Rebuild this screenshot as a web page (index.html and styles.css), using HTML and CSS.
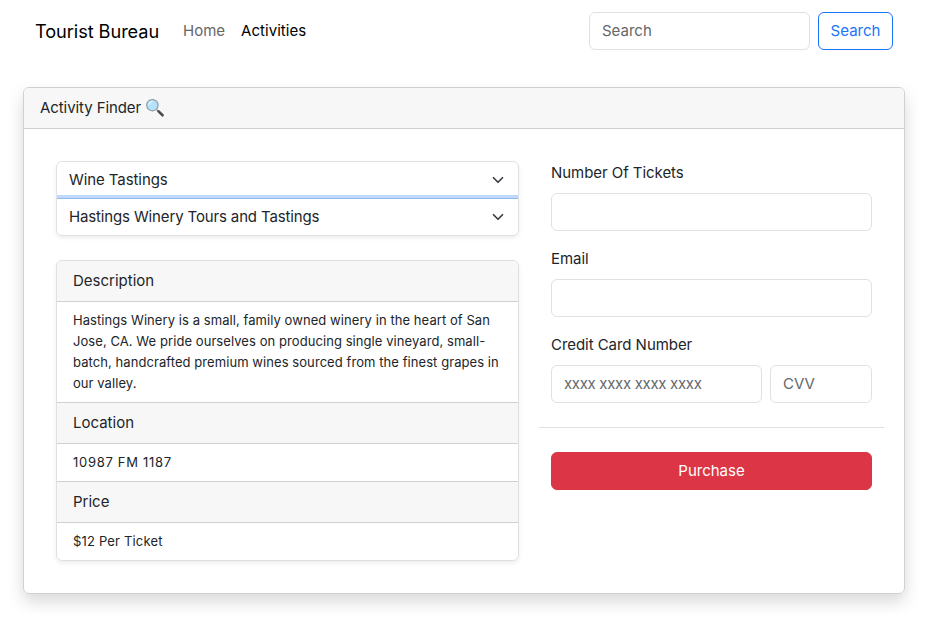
FILE: index.html
```html
<!DOCTYPE html>
<html lang="en">
<head>
<meta charset="utf-8">
<title>Tourist Bureau</title>
<link rel="stylesheet" href="styles.css">
</head>
<body>
<nav class="navbar">
  <a class="brand">Tourist Bureau</a>
  <a class="nav-link">Home</a>
  <a class="nav-link active">Activities</a>
  <form class="search">
    <input class="control" type="text" placeholder="Search">
    <button class="btn btn-outline" type="button">Search</button>
  </form>
</nav>
<main class="finder">
  <header class="finder-header"><span class="finder-title">Activity Finder</span>
    <svg class="magnifier" viewBox="0 0 20 20">
      <path d="M12 12l2 2" stroke="#777" stroke-width="1.6"/>
      <path d="M13.6 13.4l4 3.9" stroke="#4b4b4b" stroke-width="2.6" stroke-linecap="round"/>
      <circle cx="7.4" cy="7.2" r="5.7" fill="#b5e2fb" stroke="#8b969c" stroke-width="1.1"/>
      <path d="M3.8 6.6a3.8 3.8 0 0 1 3.2-3" fill="none" stroke="#e4f5ff" stroke-width="1.3" stroke-linecap="round"/>
    </svg>
  </header>
  <div class="finder-body">
    <section class="left">
      <div class="selects">
        <div class="select first"><span class="category">Wine Tastings</span><svg viewBox="0 0 16 16"><path d="m2 5 6 6 6-6"/></svg></div>
        <div class="select"><span class="activity">Hastings Winery Tours and Tastings</span><svg viewBox="0 0 16 16"><path d="m2 5 6 6 6-6"/></svg></div>
      </div>
      <div class="details">
        <h2>Description</h2>
        <p>Hastings Winery is a small, family owned winery in the heart of San<br>Jose, CA. We pride ourselves on producing single vineyard, small-<br>batch, handcrafted premium wines sourced from the finest grapes in<br>our valley.</p>
        <h2>Location</h2>
        <p class="address">10987 FM 1187</p>
        <h2>Price</h2>
        <p class="price">$12 Per Ticket</p>
      </div>
    </section>
    <form class="order">
      <label>Number Of Tickets</label>
      <input class="control" type="text">
      <label>Email</label>
      <input class="control" type="text">
      <label>Credit Card Number</label>
      <div class="card-row">
        <input class="control card-number" type="text" placeholder="xxxx xxxx xxxx xxxx">
        <input class="control cvv" type="text" placeholder="CVV">
      </div>
      <hr>
      <button class="btn btn-danger" type="button">Purchase</button>
    </form>
  </div>
</main>
</body>
</html>
```
FILE: styles.css
```css
* { box-sizing: border-box; }
body { margin: 0; min-height: 622px; background: #fff; color: #212529; font: 15px/24px Inter, "Liberation Sans", sans-serif; }
input, button { font: inherit; }
.navbar { display: flex; align-items: center; height: 62px; padding: 0 32px 0 35px; }
.brand { font-size: 18.2px; letter-spacing: -.07px; color: #000; margin-right: 24px; width: 124px; white-space: nowrap; }
.nav-link { color: #666; margin-right: 16px; white-space: nowrap; }
.nav-link.active { color: #000; letter-spacing: .05px; }
.search { display: flex; gap: 8px; margin-left: auto; }
.search .control { width: 221px; }
.control { display: block; width: 100%; height: 38px; min-width: 0; padding: 5px 12px 7px; border: 1px solid #dee2e6; border-radius: 6px; background: #fff; color: #212529; }
.control::placeholder { color: #63676b; opacity: 1; }
.btn { height: 38px; padding: 0; border: 1px solid; border-radius: 6px; }
.btn-outline { width: 75px; background: #fff; color: #1a73fb; }
.finder { margin: 25px 20px 0 23px; height: 507px; border: 1px solid #d0d0d1; border-radius: 6px; box-shadow: 0 8px 16px rgba(0,0,0,.15); }
.finder-header { display: flex; align-items: center; height: 41px; padding: 0 16px; background: #f7f7f7; border-bottom: 1px solid #d0d0d1; border-radius: 5px 5px 0 0; }
.finder-title { letter-spacing: -.08px; }
.magnifier { width: 20px; height: 20px; margin-left: 4px; }
.finder-body { display: flex; gap: 32px; padding: 32px; }
.left { width: 463px; }
.selects { border-radius: 6px; box-shadow: 0 2px 4px rgba(0,0,0,.075); border: 1px solid #dee2e6; }
.select { display: flex; align-items: center; justify-content: space-between; height: 36px; padding: 0 14px 0 12px; }
.select.first { height: 37px; border-bottom: 1px solid #95baeb; box-shadow: inset 0 -3px #bfdafd; }
.select svg { width: 12px; height: 12px; fill: none; stroke: #343a40; stroke-width: 2.2; stroke-linecap: round; stroke-linejoin: round; }
.category { letter-spacing: -.08px; }
.activity { letter-spacing: -.14px; }
.details { margin-top: 24px; border: 1px solid #dee0e2; border-radius: 6px; box-shadow: 0 2px 4px rgba(0,0,0,.075); overflow: hidden; }
.details h2 { margin: 0; height: 41px; padding: 8px 16px; font: inherit; background: #f7f7f7; border-bottom: 1px solid #d0d0d1; }
.details p { margin: 0; padding: 8px 16px; font-size: 13px; line-height: 21px; letter-spacing: .07px; border-bottom: 1px solid #d0d0d1; white-space: nowrap; }
.details p:last-child { border-bottom: 0; }
.details .address { letter-spacing: .7px; }
.details .price { letter-spacing: .17px; }
.order { width: 321px; }
.order label { display: block; margin-bottom: 8px; letter-spacing: -.05px; }
.order > .control { margin-bottom: 16px; }
.card-row { display: flex; gap: 8px; }
.card-row .card-number { letter-spacing: -.32px; }
.card-row .cvv { flex: 0 0 102px; }
hr { margin: 24px -12px; border: 0; border-top: 1px solid #dee0e1; }
.btn-danger { display: block; width: 100%; color: #fff; background: #dc3545; border-color: #dc3545; }
```
